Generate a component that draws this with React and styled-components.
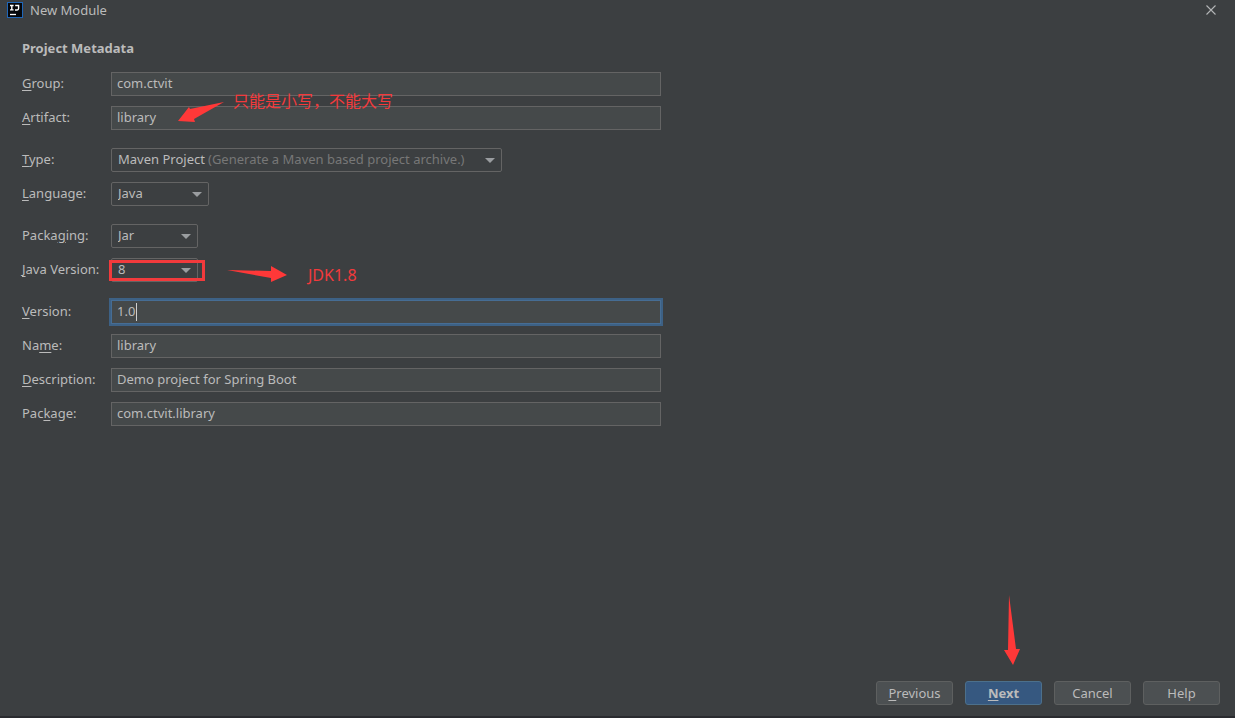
import React, { useState } from "react"
import styled, { createGlobalStyle, css } from "styled-components"

const initial = {
  group: 'com.ctvit',
  artifact: 'library',
  type: 'Maven Project',
  language: 'Java',
  packaging: 'Jar',
  javaVersion: '8',
  version: '1.0',
  name: 'library',
  description: 'Demo project for Spring Boot',
  packageName: 'com.ctvit.library',
};

// "&" marks the mnemonic letter, it is drawn underlined
const Mnemonic = ({ text }) => {
  const at = text.indexOf('&');
  if (at < 0) return text;
  return (
    <span>{text.slice(0, at)}<u>{text[at + 1]}</u>{text.slice(at + 2)}</span>
  )
}

const App = () => {
  const [values, setValues] = useState(initial);

  const bind = (key) => ({
    id: key,
    value: values[key],
    onChange: (e) => setValues({ ...values, [key]: e.target.value }),
  })

  return (
    <>
      <GlobalStyle />
      <Dialog>
        <TitleBar>
          <Logo viewBox="0 0 16 16" aria-hidden="true">
            <rect width="16" height="16" fill="#1f66b8" />
            <rect x="1" y="1" width="14" height="14" fill="#05070b" />
            <path d="M3 3.5h3.6M4.8 3.5v4.4M3 7.9h3.6M8.2 3.5h3.4v3.1q0 1.4-1.4 1.4H8" fill="none" stroke="#fff" strokeWidth="1.4" />
            <path d="M3 12.5h6" stroke="#fff" strokeWidth="1.3" />
          </Logo>
          <Title>New Module</Title>
          <CloseButton aria-label="Close">
            <svg width="10" height="10" viewBox="0 0 10 10">
              <path d="M0.5 0.5l9 9M9.5 0.5l-9 9" stroke="#b4b6b7" strokeWidth="1.1" />
            </svg>
          </CloseButton>
        </TitleBar>

        <Content>
          <Heading>Project Metadata</Heading>
          <Form>
            <Section>
              <Row>
                <Label htmlFor="group"><Mnemonic text="&Group:" /></Label>
                <Input {...bind('group')} />
              </Row>
              <Row>
                <Label htmlFor="artifact"><Mnemonic text="&Artifact:" /></Label>
                <Input {...bind('artifact')} />
                <ArtifactArrow viewBox="0 0 47 21">
                  <path d="M46 0L12 7 11 5 0 19 17 20 16 17Z" fill="#ff3838" />
                </ArtifactArrow>
                <ArtifactNote>只能是小写，不能大写</ArtifactNote>
              </Row>
            </Section>

            <Section>
              <Row>
                <Label htmlFor="type"><Mnemonic text="&Type:" /></Label>
                <SelectBox $width="391px">
                  <Select {...bind('type')}>
                    <option>Maven Project</option>
                  </Select>
                  <Hint>(Generate a Maven based project archive.)</Hint>
                  <Chevron />
                </SelectBox>
              </Row>
              <Row>
                <Label htmlFor="language"><Mnemonic text="&Language:" /></Label>
                <SelectBox $width="98px">
                  <Select {...bind('language')}>
                    <option>Java</option>
                    <option>Kotlin</option>
                    <option>Groovy</option>
                  </Select>
                  <Chevron />
                </SelectBox>
              </Row>
            </Section>

            <Section>
              <Row>
                <Label htmlFor="packaging"><Mnemonic text="Packa&ging:" /></Label>
                <SelectBox $width="87px">
                  <Select {...bind('packaging')}>
                    <option>Jar</option>
                    <option>War</option>
                  </Select>
                  <Chevron />
                </SelectBox>
              </Row>
              <Row>
                <Label htmlFor="javaVersion"><Mnemonic text="&Java Version:" /></Label>
                <SelectBox $width="87px">
                  <Select {...bind('javaVersion')}>
                    <option>8</option>
                    <option>11</option>
                  </Select>
                  <Chevron />
                </SelectBox>
                <VersionFrame />
                <VersionArrow viewBox="0 0 60 16">
                  <path d="M0 4L44 5V0L60 9 44 16V12Z" fill="#ff3838" />
                </VersionArrow>
                <VersionNote>JDK1.8</VersionNote>
              </Row>
            </Section>

            <Section>
              <Row>
                <Label htmlFor="version"><Mnemonic text="&Version:" /></Label>
                <Input {...bind('version')} $active />
                <Caret />
              </Row>
              <Row>
                <Label htmlFor="name"><Mnemonic text="Na&me:" /></Label>
                <Input {...bind('name')} />
              </Row>
              <Row>
                <Label htmlFor="description"><Mnemonic text="&Description:" /></Label>
                <Input {...bind('description')} />
              </Row>
              <Row>
                <Label htmlFor="packageName"><Mnemonic text="Pac&kage:" /></Label>
                <Input {...bind('packageName')} />
              </Row>
            </Section>
          </Form>
        </Content>

        <Footer>
          <Button><Mnemonic text="&Previous" /></Button>
          <NextWrapper>
            <NextArrow viewBox="0 0 16 70">
              <path d="M5 0L12 54H16L9 70 0 55H4Z" fill="#ff3838" />
            </NextArrow>
            <Button $primary><Mnemonic text="&Next" /></Button>
          </NextWrapper>
          <Button>Cancel</Button>
          <Button>Help</Button>
        </Footer>
      </Dialog>
    </>
  )
}

const GlobalStyle = createGlobalStyle`
  * {
    box-sizing: border-box;
  }
  body {
    margin: 0;
    background: #3c3f41;
  }
  body, input, select, button {
    font-family: "Noto Sans", "Noto Sans CJK SC", sans-serif;
    font-size: 13px;
    line-height: 18px;
    color: #bbbbbb;
  }
  u {
    text-underline-offset: 2px;
  }
`;

const Dialog = styled.div`
  display: flex;
  flex-direction: column;
  min-height: 100vh;
  border-bottom: 2px solid #2a2b2f;
`;
const TitleBar = styled.header`
  display: flex;
  align-items: center;
  height: 20px;
  padding: 0 19px 0 7px;
`;
const Logo = styled.svg`
  width: 16px;
  height: 16px;
`;
const Title = styled.span`
  flex: 1;
  margin-left: 7px;
`;
const CloseButton = styled.button`
  display: flex;
  padding: 0;
  border: 0;
  background: none;
`;

const Content = styled.main`
  flex: 1;
  padding: 19px 22px;
`;
const Heading = styled.h1`
  margin: 0 0 15px;
  font-size: 13px;
  line-height: 18px;
  font-weight: 700;
`;
const Form = styled.form`
  display: flex;
  flex-direction: column;
  gap: 18px;
`;
const Section = styled.div`
  display: flex;
  flex-direction: column;
  gap: 10px;
`;
const Row = styled.div`
  position: relative;
  display: grid;
  grid-template-columns: 89px minmax(0, 550px);
  align-items: center;
`;
const Label = styled.label`
  padding-bottom: 2px;
  white-space: nowrap;
`;

const Input = styled.input`
  width: 100%;
  height: 24px;
  padding: 0 5px 2px;
  border: 1px solid #646464;
  border-radius: 0;
  outline: none;
  background: #45494a;

  ${({ $active }) => $active && css`
    border-color: #466d94;
    box-shadow: 0 0 0 2px #3d6185;
  `}
`;
const Caret = styled.span`
  position: absolute;
  left: 114px;
  top: 3px;
  width: 1px;
  height: 18px;
  background: #d0d0d0;
`;

const SelectBox = styled.div`
  display: grid;
  align-items: center;
  width: ${({ $width }) => $width};
  max-width: 100%;

  > * {
    grid-area: 1 / 1;
  }
`;
const Select = styled.select`
  width: 100%;
  height: 24px;
  padding: 0 20px 2px 6px;
  border: 1px solid #646464;
  border-radius: 2px;
  outline: none;
  appearance: none;
  background: #3c3f41;
`;
const Hint = styled.span`
  padding: 0 0 2px 97px;
  color: #777777;
  white-space: nowrap;
  pointer-events: none;
`;
const Chevron = styled.span`
  justify-self: end;
  margin-right: 7px;
  border: 5px solid transparent;
  border-top-color: #9a9da0;
  border-bottom: 0;
  pointer-events: none;
`;

// red marks drawn over the form
const ArtifactArrow = styled.svg`
  position: absolute;
  left: 156px;
  top: -4px;
  width: 47px;
  height: 21px;
`;
const Note = styled.span`
  position: absolute;
  font-size: 16px;
  line-height: 24px;
  color: #f23a3c;
  white-space: nowrap;
`;
const ArtifactNote = styled(Note)`
  left: 211px;
  top: -17px;
`;
const VersionNote = styled(Note)`
  left: 286px;
  top: 5px;
`;
const VersionFrame = styled.span`
  position: absolute;
  left: 87px;
  top: 2px;
  width: 96px;
  height: 21px;
  border: 3px solid #f23a3c;
  pointer-events: none;
`;
const VersionArrow = styled.svg`
  position: absolute;
  left: 205px;
  top: 8px;
  width: 60px;
  height: 16px;
`;

const Footer = styled.footer`
  display: flex;
  justify-content: flex-end;
  gap: 12px;
  padding: 0 15px 11px;
`;
const Button = styled.button`
  width: 77px;
  height: 24px;
  padding: 0;
  border: 1px solid #5e6060;
  border-radius: 3px;
  background: #4c5052;

  ${({ $primary }) => $primary && css`
    border-color: #4c708c;
    background: #365880;
    font-weight: 700;
  `}
`;
const NextWrapper = styled.div`
  position: relative;
`;
const NextArrow = styled.svg`
  position: absolute;
  left: 39px;
  bottom: 40px;
  width: 16px;
  height: 70px;
`;

export default App;
